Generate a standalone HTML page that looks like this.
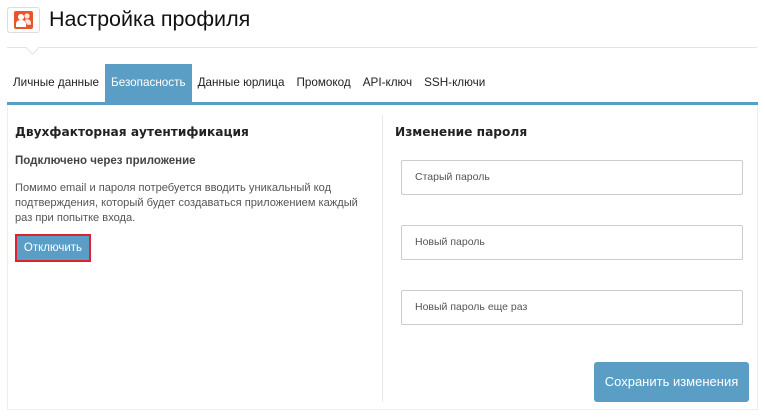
<!DOCTYPE html>
<html><head><meta charset="utf-8"><style>
*{margin:0;padding:0;box-sizing:border-box}
body{width:765px;height:419px;background:#fff;font-family:"Liberation Sans","DejaVu Sans",sans-serif;color:#333;position:relative;overflow:hidden}
.abs{position:absolute}
.icon{left:7px;top:7px;width:33px;height:26px;border:1px solid #ddd;border-radius:3px;background:#fff}
h1{position:absolute;left:49px;top:7px;font:400 21.5px "Liberation Sans","DejaVu Sans",sans-serif;color:#111}
.sep{left:7px;top:47px;width:750px;height:1px;background:#e4e4e4}
.notch{left:28px;top:44px;width:9px;height:9px;background:#fff;border-right:1px solid #e4e4e4;border-bottom:1px solid #e4e4e4;transform:rotate(45deg)}
.tabs{left:7px;top:64px;height:38px;display:flex;font-size:11.7px}
.tabs span{padding:0 6px;line-height:38px;color:#222}
.tabs .a{background:#5a9ec6;color:#fff;padding:0 6px}
.bar{left:7px;top:102px;width:751px;height:3px;background:#5a9ec6}
.panel{left:7px;top:105px;width:751px;height:305px;border:1px solid #eee;border-top:0}
.div{left:382px;top:115px;width:1px;height:287px;background:#e8e8e8}
.h{font-weight:bold;font-size:12.2px;color:#222;font-family:"DejaVu Sans",sans-serif}
.p{font-size:11.1px;line-height:15px;color:#555}
.btn{left:15px;top:234px;width:76px;height:28px;border:2px solid #d9232f;background:#5a9ec6;color:#fff;font-size:11.5px;text-align:center;line-height:24px}
.in{left:401px;width:342px;height:35px;border:1px solid #ccc;border-radius:2px;font-size:10.5px;color:#555;padding-left:13px;line-height:33px}
.save{left:594px;top:362px;width:155px;height:40px;background:#5a9ec6;border-radius:3px;color:#fff;font-size:13px;text-align:center;line-height:40px}
</style></head><body>
<div class="abs icon"><svg width="31" height="24" viewBox="0 0 31 24"><rect x="6" y="3" width="19" height="18" rx="2" fill="#e8552b"/><circle cx="13" cy="9" r="3" fill="#fff"/><path d="M8 19v-3c0-2.5 2-4 5-4s5 1.5 5 4v3z" fill="#fff"/><circle cx="19" cy="8" r="2.6" fill="#fff" opacity=".85"/><path d="M17 12c1-.6 1.5-.7 2-.7 2.5 0 4 1.5 4 3.5v2h-4" fill="#fff" opacity=".85"/></svg></div>
<h1>Настройка профиля</h1>
<div class="abs sep"></div><div class="abs notch"></div>
<div class="abs tabs"><span>Личные данные</span><span class="a">Безопасность</span><span>Данные юрлица</span><span>Промокод</span><span>API-ключ</span><span>SSH-ключи</span></div>
<div class="abs bar"></div>
<div class="abs panel"></div>
<div class="abs div"></div>
<div class="abs h" style="left:15px;top:125px">Двухфакторная аутентификация</div>
<div class="abs" style="left:15px;top:155px;font-size:11.5px;font-weight:bold;color:#444">Подключено через приложение</div>
<div class="abs p" style="left:15px;top:181px;width:345px">Помимо email и пароля потребуется вводить уникальный код подтверждения, который будет создаваться приложением каждый раз при попытке входа.</div>
<div class="abs btn">Отключить</div>
<div class="abs h" style="left:395px;top:125px">Изменение пароля</div>
<div class="abs in" style="top:160px">Старый пароль</div>
<div class="abs in" style="top:225px">Новый пароль</div>
<div class="abs in" style="top:290px">Новый пароль еще раз</div>
<div class="abs save">Сохранить изменения</div>
</body></html>
